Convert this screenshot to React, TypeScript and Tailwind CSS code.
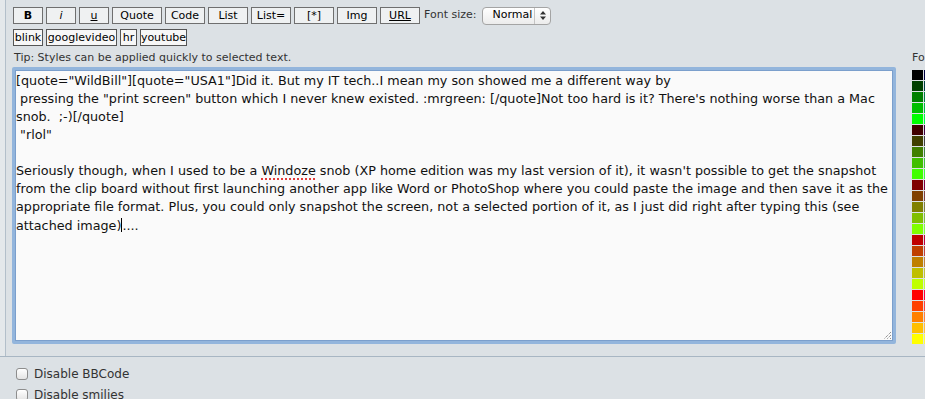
import React from 'react';

const mainButtons = [
  { label: 'B', w: 'w-[30px]', cls: 'font-bold' },
  { label: 'i', w: 'w-[30px]', cls: 'italic' },
  { label: 'u', w: 'w-[30px]', cls: 'underline' },
  { label: 'Quote', w: 'w-[50px]', cls: '' },
  { label: 'Code', w: 'w-[40px]', cls: '' },
  { label: 'List', w: 'w-[40px]', cls: '' },
  { label: 'List=', w: 'w-[40px]', cls: '' },
  { label: '[*]', w: 'w-[40px]', cls: '' },
  { label: 'Img', w: 'w-[40px]', cls: '' },
  { label: 'URL', w: 'w-[40px]', cls: 'underline' },
];

const customButtons = [
  { label: 'blink', w: 'w-[30px]' },
  { label: 'googlevideo', w: 'w-[71px]' },
  { label: 'hr', w: 'w-[17px]' },
  { label: 'youtube', w: 'w-[47px]' },
];

// phpBB colour palette: rows = red/green, columns = blue
const steps = ['00', '40', '80', 'BF', 'FF'];
const paletteRows: string[][] = [];
for (const r of steps) {
  for (const g of steps) {
    paletteRows.push(steps.map((b) => `#${r}${g}${b}`));
  }
}

const lines = [
  '[quote="WildBill"][quote="USA1"]Did it. But my IT tech..I mean my son showed me a different way by',
  ' pressing the "print screen" button which I never knew existed. :mrgreen: [/quote]Not too hard is it? There\'s nothing worse than a Mac',
  'snob.  ;-)[/quote]',
  ' "rlol"',
  '',
];

function Checkbox({ label }: { label: string }) {
  return (
    <label className="flex h-[21px] items-center gap-[6px] text-[12px] text-[#333]">
      <span className="h-[12px] w-[12px] rounded-[3px] border border-[#8d8d8d] bg-gradient-to-b from-white to-[#e4e4e4] shadow-[inset_0_1px_0_#fff]" />
      {label}
    </label>
  );
}

export default function App() {
  return (
    <div className="flex h-[399px] w-[925px] flex-col overflow-hidden bg-[#dce1e5] font-['DejaVu_Sans','Liberation_Sans',sans-serif] text-black">
      <div className="flex h-[356px] shrink-0">
        <div className="w-[5px] shrink-0 bg-[#e4e8eb]" />
        <div className="w-px shrink-0 bg-[#b3bfca]" />

        <div className="flex w-[900px] shrink-0 flex-col pl-[7px] pt-[7px]">
          <div className="flex h-[17px] items-center gap-[3px]">
            {mainButtons.map((b) => (
              <button
                key={b.label}
                type="button"
                className={`flex h-[17px] ${b.w} items-center justify-center border border-[#6f6f6f] bg-[#eff1f2] text-[11px] leading-none ${b.cls}`}
              >
                {b.label}
              </button>
            ))}
            <span className="ml-[1px] text-[11px] text-[#333]">Font size:</span>
            <div className="ml-[3px] flex h-[18px] w-[69px] items-center rounded-[4px] border border-[#a4a4a4] bg-gradient-to-b from-white to-[#ececec] text-[11px]">
              <span className="flex-1 pl-[9px]">Normal</span>
              <span className="flex h-full w-[16px] items-center justify-center border-l border-[#c4c4c4]">
                <svg width="6" height="9" viewBox="0 0 6 9">
                  <path d="M3 0 L6 3.5 L0 3.5 Z M3 9 L6 5.5 L0 5.5 Z" fill="#333" />
                </svg>
              </span>
            </div>
          </div>

          <div className="mt-[5px] flex h-[17px] items-center gap-[3px]">
            {customButtons.map((b) => (
              <button
                key={b.label}
                type="button"
                className={`flex h-[17px] ${b.w} items-center justify-center border border-[#555] bg-[#f7f7f7] text-[11px] leading-none`}
              >
                {b.label}
              </button>
            ))}
          </div>

          <p className="mt-[4px] h-[15px] pl-[1px] text-[11px] leading-[15px] text-[#333]">
            Tip: Styles can be applied quickly to selected text.
          </p>

          <div className="relative -ml-[1px] mt-[2px] h-[277px] w-[884px] rounded-[2px] border-[3px] border-[#93b5dc] bg-[#fafafa] shadow-[inset_0_0_0_1px_#7b9fcc] pl-[1px] pt-[2px]">
            <div className="whitespace-pre text-[12.75px] leading-[18px] text-[#111]">
              {lines.map((l, i) => (
                <div key={i} className="h-[18px]">
                  {l}
                </div>
              ))}
              <div>
                Seriously though, when I used to be a{' '}
                <span className="underline decoration-[#e23b3b] decoration-dotted decoration-2 underline-offset-[3px]">Windoze</span>{' '}
                snob (XP home edition was my last version of it), it wasn't possible to get the snapshot
              </div>
              <div>from the clip board without first launching another app like Word or PhotoShop where you could paste the image and then save it as the</div>
              <div>appropriate file format. Plus, you could only snapshot the screen, not a selected portion of it, as I just did right after typing this (see</div>
              <div>
                attached image)<span className="inline-block h-[14px] w-px translate-y-[2px] bg-black" />....
              </div>
            </div>
            <svg className="absolute bottom-[1px] right-[1px]" width="10" height="10" viewBox="0 0 10 10">
              <path d="M9 2 L2 9 M9 5 L5 9 M9 8 L8 9" stroke="#666" strokeWidth="1" strokeDasharray="1 1" />
            </svg>
          </div>
        </div>

        <div className="flex shrink-0 flex-col pl-[6px] pt-[50px]">
          <span className="h-[15px] whitespace-nowrap text-[11px] leading-[15px] text-[#333]">Font colour</span>
          <div className="mt-[5px] flex flex-col gap-px">
            {paletteRows.map((row, i) => (
              <div key={i} className="flex gap-px">
                {row.map((c) => (
                  <span key={c} className="h-[10px] w-[11px] shrink-0" style={{ backgroundColor: c }} />
                ))}
              </div>
            ))}
          </div>
        </div>
      </div>

      <div className="h-px shrink-0 bg-[#a8b6c3]" />

      <div className="flex flex-col pl-[16px] pt-[6px]">
        <Checkbox label="Disable BBCode" />
        <Checkbox label="Disable smilies" />
      </div>
    </div>
  );
}
